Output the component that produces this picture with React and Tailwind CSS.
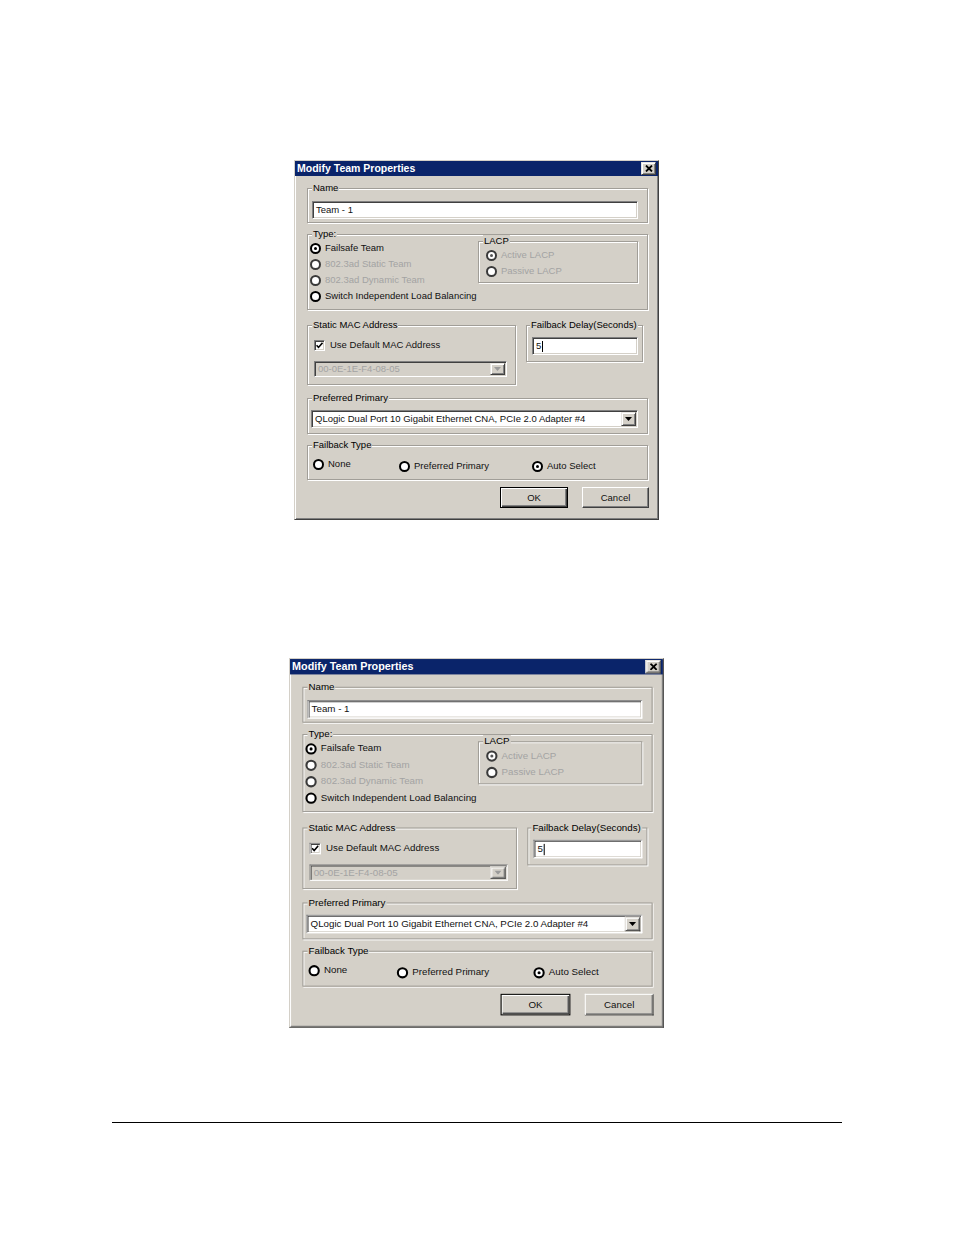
import React from "react";

const sunken =
  "border border-t-[#808080] border-l-[#808080] border-r-white border-b-white shadow-[inset_1px_1px_0_#404040,inset_-1px_-1px_0_#d4d0c8]";
const raised =
  "bg-[#d4d0c8] border border-t-[#e8e6e2] border-l-[#e8e6e2] border-r-[#404040] border-b-[#404040] shadow-[inset_1px_1px_0_#fff,inset_-1px_-1px_0_#808080]";

const Group = ({ label, labelClass = "ml-[4px]", className = "", children }) => (
  <div className={`border border-[#a19e98] shadow-[inset_1px_1px_0_#fff,1px_1px_0_#fff] ${className}`}>
    <div className={`-mt-[7px] h-[12px] leading-[12px] ${labelClass}`}>
      <span className="bg-[#d4d0c8] px-[1px] whitespace-nowrap">{label}</span>
    </div>
    {children}
  </div>
);

const Radio = ({ checked, disabled, label, className = "" }) => (
  <div className={`flex items-center h-[16px] gap-[4px] whitespace-nowrap ${className}`}>
    <span
      className={`w-[11px] h-[11px] shrink-0 rounded-full border-2 bg-white flex items-center justify-center ${
        disabled ? "border-[#3a3a3a]" : "border-black"
      }`}
    >
      {checked && <span className={`w-[3px] h-[3px] rounded-full ${disabled ? "bg-[#555]" : "bg-black"}`} />}
    </span>
    <span className={disabled ? "text-[#a3a3a3]" : "text-[#111]"}>{label}</span>
  </div>
);

const Arrow = ({ disabled }) => (
  <svg width="7" height="4" viewBox="0 0 7 4">
    <path d="M0 0h7L3.5 4z" fill={disabled ? "#9a9a9a" : "#000"} />
  </svg>
);

const Combo = ({ value, disabled, className = "" }) => (
  <div className={`flex items-stretch ${sunken} ${disabled ? "bg-[#d4d0c8]" : "bg-white"} ${className}`}>
    <span className={`flex-1 flex items-center pl-[3px] whitespace-nowrap overflow-hidden ${disabled ? "text-[#a3a3a3]" : "text-[#111]"}`}>
      {value}
    </span>
    <span className={`w-[15px] m-[1px] flex items-center justify-center ${raised}`}>
      <Arrow disabled={disabled} />
    </span>
  </div>
);

const Button = ({ children, isDefault, className = "" }) => (
  <div
    className={`h-[21px] flex items-center justify-center bg-[#d4d0c8] text-[#111] ${
      isDefault
        ? "border border-black shadow-[inset_1px_1px_0_#fff,inset_-1px_-1px_0_#404040,inset_-2px_-2px_0_#808080]"
        : "border border-t-white border-l-white border-r-[#404040] border-b-[#404040] shadow-[inset_-1px_-1px_0_#808080]"
    } ${className}`}
  >
    {children}
  </div>
);

const Dialog = () => (
  <div className="w-[365px] bg-[#d4d0c8] border border-t-[#d4d0c8] border-l-[#d4d0c8] border-r-[#404040] border-b-[#404040] shadow-[inset_1px_1px_0_#fff,inset_-1px_-1px_0_#808080] text-[9.5px] leading-[12px] font-['Liberation_Sans',Arial,sans-serif] select-none">
    {/* title bar */}
    <div className="h-[15px] bg-[#0a246a] flex items-center justify-between pl-[2px] pr-[2px]">
      <span className="text-white font-bold text-[10.5px] leading-[15px]">Modify Team Properties</span>
      <span className={`w-[15px] h-[13px] flex items-center justify-center ${raised}`}>
        <svg width="8" height="7" viewBox="0 0 8 7">
          <path d="M1 0.5l6 6M7 0.5l-6 6" stroke="#000" strokeWidth="1.8" />
        </svg>
      </span>
    </div>

    <div className="pl-[12px] pb-[11px]">
      {/* Name */}
      <Group label="Name" className="w-[341px] mt-[12px] pb-[3px]">
        <div className={`mt-[7px] ml-[4px] w-[326px] h-[18px] bg-white flex items-center pl-[3px] text-[#111] ${sunken}`}>
          Team - 1
        </div>
      </Group>

      {/* Type */}
      <Group label="Type:" className="w-[341px] mt-[11px] pb-[5px]">
        <div className="flex items-start">
          <div className="w-[170px] pl-[2px]">
            <Radio checked label="Failsafe Team" />
            <Radio disabled label="802.3ad Static Team" />
            <Radio disabled label="802.3ad Dynamic Team" />
            <Radio label="Switch Independent Load Balancing" />
          </div>
          <Group label="LACP" className="w-[160px] mt-[1px] pb-[3px]">
            <div className="pl-[7px]">
              <Radio disabled checked label="Active LACP" />
              <Radio disabled label="Passive LACP" />
            </div>
          </Group>
        </div>
      </Group>

      {/* Static MAC + Failback Delay */}
      <div className="flex items-start gap-[10px] mt-[15px]">
        <Group label="Static MAC Address" className="w-[209px] pb-[7px]">
          <div className="mt-[6px] pl-[6px] h-[16px] flex items-center gap-[5px] text-[#111]">
            <span className={`w-[11px] h-[11px] bg-white flex items-center justify-center ${sunken}`}>
              <svg width="7" height="7" viewBox="0 0 7 7">
                <path d="M0.5 3.2l2 2.2L6.5 0.8" stroke="#000" strokeWidth="1.6" fill="none" />
              </svg>
            </span>
            <span>Use Default MAC Address</span>
          </div>
          <Combo disabled value="00-0E-1E-F4-08-05" className="mt-[8px] ml-[6px] w-[193px] h-[16px]" />
        </Group>

        <Group label="Failback Delay(Seconds)" labelClass="ml-[3px]" className="w-[117px] pb-[6px]">
          <div className={`mt-[6px] ml-[5px] w-[106px] h-[18px] bg-white flex items-center pl-[3px] text-[#111] ${sunken}`}>
            5<span className="w-px h-[11px] bg-black ml-[1px]" />
          </div>
        </Group>
      </div>

      {/* Preferred Primary */}
      <Group label="Preferred Primary" className="w-[341px] mt-[13px] pb-[5px]">
        <Combo
          value="QLogic Dual Port 10 Gigabit Ethernet CNA, PCIe 2.0 Adapter #4"
          className="mt-[6px] ml-[3px] w-[327px] h-[18px]"
        />
      </Group>

      {/* Failback Type */}
      <Group label="Failback Type" className="w-[341px] mt-[11px] pb-[5px]">
        <div className="flex items-start mt-[5px] pl-[5px]">
          <Radio label="None" className="w-[86px]" />
          <Radio label="Preferred Primary" className="w-[133px] mt-[2px]" />
          <Radio checked label="Auto Select" className="mt-[2px]" />
        </div>
      </Group>

      {/* buttons */}
      <div className="flex gap-[14px] mt-[7px] ml-[193px]">
        <Button isDefault className="w-[68px]">OK</Button>
        <Button className="w-[67px]">Cancel</Button>
      </div>
    </div>
  </div>
);

export default function App() {
  return (
    <div className="w-[954px] h-[1235px] bg-white pt-[160px]">
      <div className="ml-[294px] w-fit">
        <Dialog />
      </div>
      <div className="ml-[289px] mt-[138px] w-fit scale-[1.027] origin-top-left">
        <Dialog />
      </div>
      <div className="ml-[112px] mt-[104px] w-[730px] h-px bg-black" />
    </div>
  );
}
